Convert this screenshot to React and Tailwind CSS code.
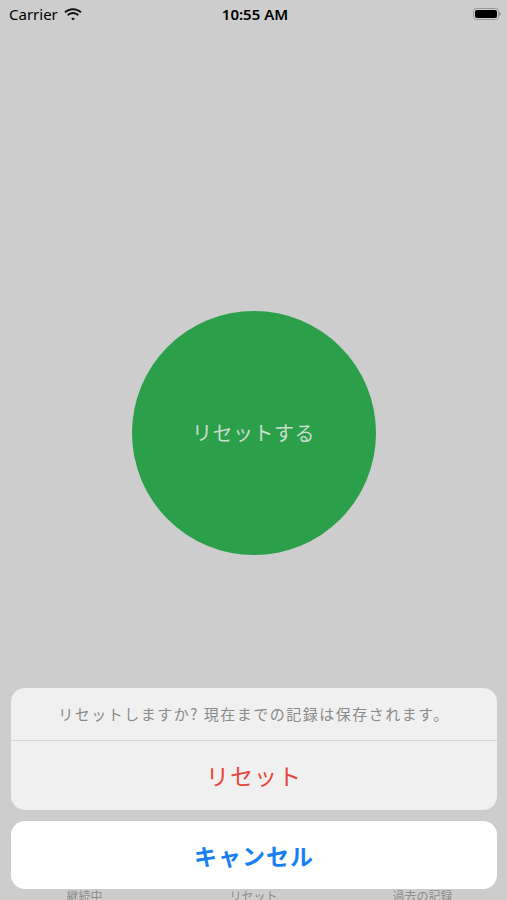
import React from 'react'

const jp = { fontFamily: '"Noto Sans CJK JP", "Noto Sans", sans-serif' }

const Wifi = () => (
    <svg width="18" height="13" viewBox="0 0 18 13">
        <path d="M9 2.2c2.9 0 5.5 1.1 7.4 2.9l1.3-1.4C15.4 1.5 12.4.2 9 .2S2.6 1.5.3 3.7l1.3 1.4C3.5 3.3 6.1 2.2 9 2.2z" fill="#111" />
        <path d="M9 6.1c1.8 0 3.4.7 4.6 1.8l1.3-1.4C13.4 5 11.3 4.1 9 4.1S4.6 5 3.1 6.5l1.3 1.4C5.6 6.8 7.2 6.1 9 6.1z" fill="#111" />
        <path d="M9 9.8c.7 0 1.3.3 1.8.7L9 12.5 7.2 10.5c.5-.4 1.1-.7 1.8-.7z" fill="#111" />
    </svg>
)

const Battery = () => (
    <div className="flex items-center">
        <div className="w-[26px] h-[12px] rounded-[3.5px] border border-[#9a9a9a] p-[1px]">
            <div className="w-full h-full rounded-[2px] bg-black" />
        </div>
        <div className="w-[1.5px] h-[4px] rounded-r-sm bg-[#9a9a9a]" />
    </div>
)

const StatusBar = () => (
    <div className="h-[28px] flex items-center justify-between pl-[9px] pr-[6px] text-[15px] text-black" style={{ fontFamily: '"Noto Sans", sans-serif' }}>
        <div className="flex items-center gap-[6px] w-[120px]">
            <span>Carrier</span>
            <Wifi />
        </div>
        <span className="font-semibold">10:55 AM</span>
        <div className="w-[120px] flex justify-end">
            <Battery />
        </div>
    </div>
)

const App = () => {
    return (
        <div className="relative w-full h-[900px] overflow-hidden bg-[#cdcdcd] flex flex-col" style={jp}>
            <StatusBar />

            <div className="mt-[283px] flex justify-center">
                <div className="w-[244px] h-[244px] rounded-full bg-[#2b9f4a] flex items-center justify-center">
                    <span className="text-[20px] tracking-[0.5px] text-[#c9dccd]">リセットする</span>
                </div>
            </div>

            <div className="flex-1" />

            <div className="h-[60px] grid grid-cols-3 text-[12px] text-[#8e8e8e]">
                <span className="mt-[47px] text-center">継続中</span>
                <span className="mt-[47px] text-center">リセット</span>
                <span className="mt-[47px] text-center">過去の記録</span>
            </div>

            {/* action sheet */}
            <div className="absolute left-[11px] right-[10px] bottom-[11px] flex flex-col gap-[11px]">
                <div className="rounded-[14px] bg-[#f0f0f0] overflow-hidden">
                    <div className="h-[53px] flex items-center justify-center border-b border-[#d8d8d8]">
                        <span className="text-[15px] text-[#8b8b8b] tracking-[1.5px]">リセットしますか? 現在までの記録は保存されます。</span>
                    </div>
                    <div className="h-[69px] flex items-center justify-center">
                        <span className="text-[23px] tracking-[1px] text-[#e8443b]">リセット</span>
                    </div>
                </div>
                <div className="h-[68px] rounded-[14px] bg-white flex items-center justify-center">
                    <span className="text-[23px] tracking-[1px] font-bold text-[#1a7ff0]">キャンセル</span>
                </div>
            </div>
        </div>
    )
}

export default App
